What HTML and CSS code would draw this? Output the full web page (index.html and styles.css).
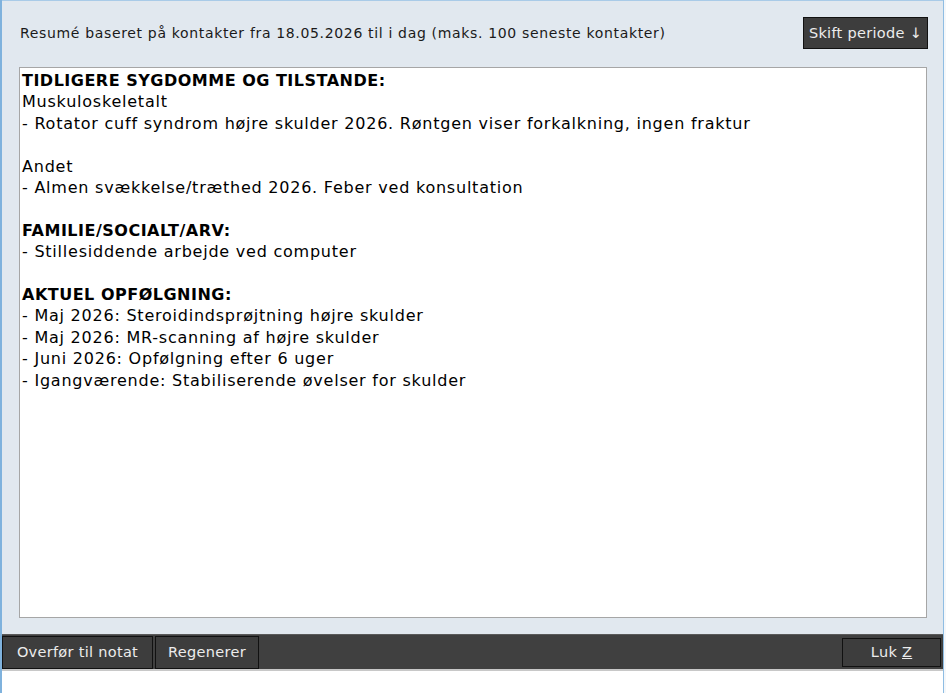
FILE: index.html
```html
<!DOCTYPE html>
<html lang="da">
<head>
    <title>Resumé</title>
    <meta charset="utf-8">
    <link rel="stylesheet" href="styles.css">
</head>
<body>
    <div id="vindue">
        <div id="panel">
            <div class="topbar">
                <span class="periode">Resumé baseret på kontakter fra 18.05.2026 til i dag (maks. 100 seneste kontakter)</span>
                <button class="knap skift">Skift periode ↓</button>
            </div>
            <div id="resume">
                <b>TIDLIGERE SYGDOMME OG TILSTANDE:</b><br>
                Muskuloskeletalt<br>
                - Rotator cuff syndrom højre skulder 2026. Røntgen viser forkalkning, ingen fraktur<br>
                <br>
                Andet<br>
                - Almen svækkelse/træthed 2026. Feber ved konsultation<br>
                <br>
                <b>FAMILIE/SOCIALT/ARV:</b><br>
                - Stillesiddende arbejde ved computer<br>
                <br>
                <b>AKTUEL OPFØLGNING:</b><br>
                - Maj 2026: Steroidindsprøjtning højre skulder<br>
                - Maj 2026: MR-scanning af højre skulder<br>
                - Juni 2026: Opfølgning efter 6 uger<br>
                - Igangværende: Stabiliserende øvelser for skulder
            </div>
        </div>
        <div class="bundbar">
            <button class="knap overfor">Overfør til notat</button>
            <button class="knap regen">Regenerer</button>
            <button class="knap luk">Luk <u>Z</u></button>
        </div>
        <div class="bund"></div>
    </div>
</body>
</html>
```

FILE: styles.css
```css
body {
    margin: 0;
    font-family: "DejaVu Sans", Verdana, sans-serif;
    background: #f4f7fa;
}

#vindue {
    width: 941px;
    height: 693px;
    border-left: 2px solid #7fb2dd;
    border-right: 1px solid #8fbde3;
    display: flex;
    flex-direction: column;
    background: #e1e8ef;
}

#panel {
    border-top: 1px solid #a9cbe8;
    padding: 16px 16px 15px 17px;
    display: flex;
    flex-direction: column;
    gap: 18px;
}

.topbar {
    display: flex;
    justify-content: space-between;
    align-items: center;
    height: 32px;
}

.periode {
    font-size: 14px;
    color: #1a1a1a;
    padding-left: 1px;
    letter-spacing: 0.66px;
}

.knap {
    font-family: "DejaVu Sans", Verdana, sans-serif;
    font-size: 14.5px;
    letter-spacing: 0.3px;
    color: #ececec;
    background: #3d3d3d;
    border: 1px solid #111;
    border-radius: 0;
    padding: 0;
    height: 32px;
    margin: 0;
}

.skift {
    width: 125px;
    margin-right: -1px;
}

#resume {
    height: 545px;
    background: #fff;
    border: 1px solid #a6a6a6;
    padding: 2px 2px;
    font-size: 16px;
    line-height: 21.4px;
    letter-spacing: 0.77px;
    color: #000;
}

#resume b {
    letter-spacing: 0.5px;
}

.bundbar {
    margin-top: 1px;
    height: 34px;
    background: #404040;
    border-top: 1px solid #5a5a5a;
    display: flex;
    align-items: center;
    gap: 2px;
}

.bundbar .knap {
    height: 33px;
}

.overfor {
    width: 151px;
}

.regen {
    width: 104px;
}

.bundbar .luk {
    margin-left: auto;
    margin-right: 2px;
    height: 29px;
    width: 99px;
}

.bund {
    flex: 1;
    background: #fff;
    border-top: 2px solid #c8c8c8;
}
```
